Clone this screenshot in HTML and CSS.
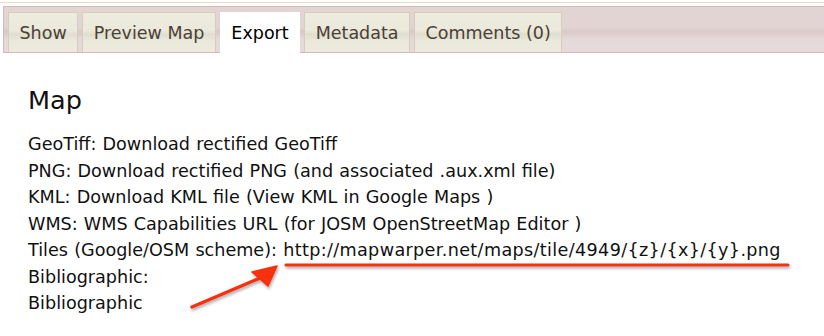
FILE: index.html
```html
<!DOCTYPE html>
<html lang="en">
<head>
  <meta charset="UTF-8" />
  <title>Map | Export</title>
  <link rel="stylesheet" href="styles.css">
</head>
<body>
  <div class="page">
    <div class="topline"></div>
    <ul class="tabs">
      <li class="tab">Show</li>
      <li class="tab">Preview Map</li>
      <li class="tab active">Export</li>
      <li class="tab">Metadata</li>
      <li class="tab">Comments (0)</li>
    </ul>

    <div class="panel">
      <h2>Map</h2>
      <p>GeoTiff: Download rectified GeoTiff</p>
      <p>PNG: Download rectified PNG (and associated .aux.xml file)</p>
      <p>KML: Download KML file (View KML in Google Maps )</p>
      <p>WMS: WMS Capabilities URL (for JOSM OpenStreetMap Editor )</p>
      <p>Tiles (Google/OSM scheme): <span class="url">http://mapwarper.net/maps/tile/4949/{z}/{x}/{y}.png</span></p>
      <p>Bibliographic:</p>
      <p>Bibliographic</p>
    </div>

    <!-- annotation drawn over the screenshot -->
    <svg class="marks" width="824" height="336" viewBox="0 0 824 336">
      <defs>
        <filter id="shadow" x="-20%" y="-20%" width="140%" height="140%">
          <feDropShadow dx="1" dy="2" stdDeviation="1.5" flood-color="#000" flood-opacity="0.35"/>
        </filter>
      </defs>
      <g filter="url(#shadow)" fill="#f5300f" stroke="#f5300f" stroke-linecap="round">
        <line x1="286" y1="265" x2="788" y2="265" stroke-width="3"/>
        <line x1="192" y1="307" x2="260" y2="278" stroke-width="3.5"/>
        <polygon points="277,266 252,272 268,286" stroke-width="1.5" stroke-linejoin="round"/>
      </g>
    </svg>
  </div>
</body>
</html>
```

FILE: styles.css
```css
body {
  margin: 0;
  padding: 0;
  background: #fff;
  font-family: Verdana, "DejaVu Sans", sans-serif;
  color: #111;
}
.page {
  position: relative;
  width: 824px;
  height: 336px;
  overflow: hidden;
}
.topline {
  height: 1px;
  margin-top: 2px;
  background: #ecdccc;
}
.tabs {
  list-style: none;
  margin: 3px 0 0 3px;
  padding: 5px 0 0 4px;
  display: flex;
  align-items: flex-start;
  gap: 4px;
  height: 40px;
  border: 1px solid #d6b9b9;
  border-right: none;
  background: linear-gradient(#e4d5d5 0%, #e2d4d4 45%, #d9c9c9 55%, #e4d8d8 70%, #e6dbdb 100%);
}
.tab {
  padding: 0 10.5px;
  height: 39px;
  line-height: 40px;
  font-size: 17.5px;
  color: #4a4034;
  border: 1px solid #d8ccbb;
  border-bottom: none;
  background: linear-gradient(#edecdf 0%, #eae9dc 45%, #dfdecf 55%, #e9e8db 70%, #ecebde 100%);
}
.tab.active {
  color: #000;
  background: #fff;
  border-color: #fff;
  height: 41px;
}
.panel {
  padding: 32px 0 0 28px;
}
h2 {
  margin: 0 0 16px;
  font-size: 25.5px;
  font-weight: normal;
  color: #111;
}
p {
  margin: 0;
  font-size: 17.6px;
  line-height: 26.5px;
  word-spacing: 0.6px;
}
.url {
  letter-spacing: 0.35px;
}
.marks {
  position: absolute;
  left: 0;
  top: 0;
}
```
